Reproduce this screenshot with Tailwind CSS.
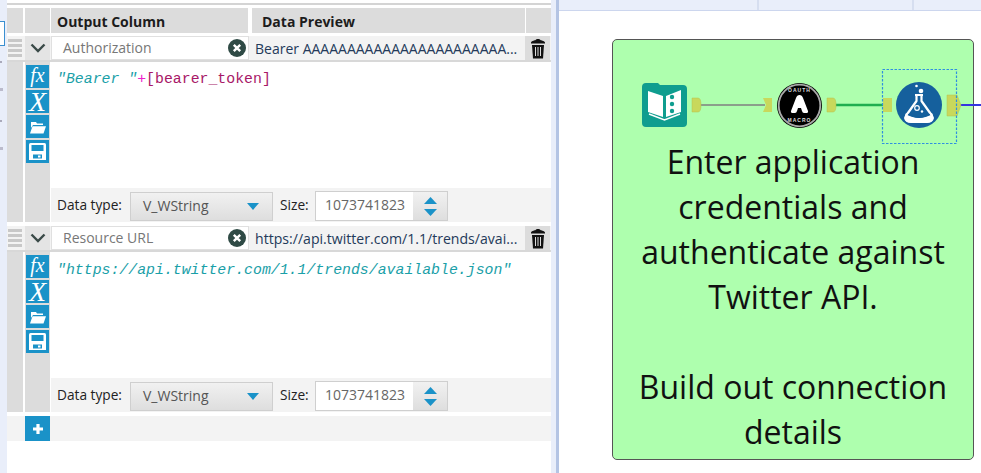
<!DOCTYPE html>
<html lang="en">
<head>
    <meta charset="UTF-8">
    <title>Download tool - Twitter API</title>
    <script src="https://cdn.jsdelivr.net/npm/@tailwindcss/browser@4"></script>
</head>
<body class="relative w-[981px] h-[473px] overflow-hidden flex bg-white font-['Open_Sans',sans-serif] text-[14px] text-[#222]">

    <!-- left strip -->
    <div class="relative w-[7px] h-full bg-[#e9eefa] shrink-0">
        <div class="absolute left-0 top-[21px] w-[5px] h-[25px] bg-white border border-l-0 border-[#3a8fd0]"></div>
        <div class="absolute left-0 top-[61px] w-[2px] h-[2px] bg-[#aab]"></div>
        <div class="absolute left-0 top-[88px] w-[3px] h-[3px] bg-[#bbc]"></div>
        <div class="absolute left-0 top-[120px] w-[2px] h-[2px] bg-[#aab]"></div>
        <div class="absolute left-0 top-[147px] w-[3px] h-[3px] bg-[#bbc]"></div>
    </div>

    <!-- configuration panel -->
    <div class="w-[544px] h-full shrink-0 flex flex-col pt-[3px]">
        <div class="h-[2px] bg-[#d4d4d4]"></div>

        <!-- header -->
        <div class="flex h-[25px] mt-[3px] font-bold text-[14px] leading-[27px] text-[#1c1c1c]">
            <div class="w-[16px] bg-[#dcdcdc]"></div>
            <div class="w-[25px] ml-[2px] bg-[#dcdcdc]"></div>
            <div class="w-[197px] ml-[1px] pl-[6px] bg-[#dcdcdc]">Output Column</div>
            <div class="w-[273px] ml-[4px] pl-[10px] bg-[#dcdcdc]">Data Preview</div>
            <div class="w-[25px] ml-[1px] bg-[#dcdcdc]"></div>
        </div>

        <!-- field 1 -->
        <div class="flex h-[26px] mt-[3px] bg-[#f3f3f3] border-b-2 border-[#d8d8d8]">
            <div class="w-[16px] flex flex-col justify-center gap-[2px] px-[1px] bg-[#f3f3f3]">
                <div class="h-[3px] bg-[#c8c8c8]"></div><div class="h-[3px] bg-[#c8c8c8]"></div><div class="h-[3px] bg-[#c8c8c8]"></div><div class="h-[3px] bg-[#c8c8c8]"></div>
            </div>
            <div class="w-[25px] ml-[2px] flex items-center justify-center bg-[#e4e4e4]">
                <svg width="16" height="10" viewBox="0 0 16 10"><path d="M1.5 1.5 8 8l6.5-6.5" fill="none" stroke="#3a4a48" stroke-width="2.4"/></svg>
            </div>
            <div class="w-[198px] ml-[1px] flex items-center justify-between pl-[11px] pr-[2px] bg-white border border-[#e0e0e0] text-[#777]">
                <span class="mb-[2px]">Authorization</span>
                <svg width="18" height="18" viewBox="0 0 18 18"><circle cx="9" cy="9" r="9" fill="#2f4a45"/><path d="M5.8 5.8l6.4 6.4M12.2 5.8l-6.4 6.4" stroke="#fff" stroke-width="2.4"/></svg>
            </div>
            <div class="w-[276px] pl-[6px] leading-[26px] whitespace-nowrap overflow-hidden text-[#243a5a]">Bearer AAAAAAAAAAAAAAAAAAAAAAA...</div>
            <div class="w-[25px] flex items-center justify-center bg-[#dcdcdc]">
                <svg width="16" height="21" viewBox="0 0 16 21"><path d="M1 4.500C2 2.500 5 2.500 5.500 2 6 .5 10 .5 10.500 2 11 2.500 14 2.500 15 4.500V5.500H1z" fill="#111"/><path d="M2 7H14L13 20.500H3z" fill="#111"/><path d="M5.500 9v9M8 9v9M10.500 9v9" stroke="#dcdcdc" stroke-width="1"/></svg>
            </div>
        </div>
        <div class="flex h-[160px]">
            <div class="w-[16px] bg-[#dcdcdc]"></div>
            <div class="w-[25px] ml-[2px] bg-[#dcdcdc] pt-[3px] pl-[1px] flex flex-col gap-[2px]">
                <div class="w-[23px] h-[23px] bg-[#1a92c8] text-white font-['Liberation_Serif',serif] italic text-[20px] leading-[21px] text-center">fx</div>
                <div class="w-[23px] h-[23px] bg-[#1a92c8] text-white font-['Liberation_Serif',serif] italic text-[28px] leading-[23px] text-center">X</div>
                <div class="w-[23px] h-[23px] bg-[#1a92c8] flex items-center justify-center">
                    <svg width="17" height="14" viewBox="0 0 17 14"><path d="M2 2h5l1 1.500h6V5H4L2 8z" fill="#fff"/><path d="M3.500 6.200H17L14.500 13.500H1z" fill="#fff"/></svg>
                </div>
                <div class="w-[23px] h-[23px] bg-[#1a92c8] flex items-center justify-center">
                    <svg width="19" height="19" viewBox="0 0 19 19"><path d="M1 2.500Q1 1 2.500 1H16.500Q18 1 18 2.500V18H1z" fill="#fff"/><rect x="3.500" y="3" width="12" height="6" fill="#1a92c8"/><rect x="5" y="12.500" width="9" height="4" fill="#1a92c8"/><rect x="10" y="13.500" width="2.500" height="2" fill="#fff"/></svg>
                </div>
            </div>
            <div class="flex-1 ml-[1px] flex flex-col">
                <div class="flex-1 bg-white pl-[6px] pt-[7px] font-['Liberation_Mono',monospace] italic text-[14.85px] leading-[20px] whitespace-pre text-[#1aa0a8]">"Bearer "<span class="not-italic text-[#ee22cc]">+</span><span class="not-italic text-[#a81868]">[bearer_token]</span></div>
                <div class="h-[34px] bg-[#f3f3f3] flex items-center pl-[6px] pt-[2px] text-[13.7px]">
                    <span class="w-[73px] mb-[2px]">Data type:</span>
                    <div class="w-[143px] h-[29px] flex items-center justify-between pl-[12px] pr-[13px] border border-[#cfcfcf] bg-linear-to-b from-[#f1f1f1] to-[#dedede] text-[#555] text-[14px]">
                        <span class="mb-[2px]">V_WString</span>
                        <svg width="12" height="7" viewBox="0 0 12 7"><path d="M0 0H12L6 7z" fill="#1a92c8"/></svg>
                    </div>
                    <span class="ml-[7px] w-[35px] mb-[2px]">Size:</span>
                    <div class="w-[133px] h-[30px] flex border border-[#cfcfcf] bg-white text-[#666] text-[14px]">
                        <span class="w-[97px] pl-[9px] leading-[26px]">1073741823</span>
                        <div class="flex-1 flex flex-col items-center justify-center gap-[5px] bg-linear-to-b from-[#f1f1f1] to-[#dedede]">
                            <svg width="13" height="7" viewBox="0 0 13 7"><path d="M0 7H13L6.500 0z" fill="#1a92c8"/></svg>
                            <svg width="13" height="7" viewBox="0 0 13 7"><path d="M0 0H13L6.500 7z" fill="#1a92c8"/></svg>
                        </div>
                    </div>
                </div>
            </div>
        </div>

        <!-- field 2 -->
        <div class="flex h-[26px] mt-[4px] bg-[#f3f3f3] border-b-2 border-[#d8d8d8]">
            <div class="w-[16px] flex flex-col justify-center gap-[2px] px-[1px] bg-[#f3f3f3]">
                <div class="h-[3px] bg-[#c8c8c8]"></div><div class="h-[3px] bg-[#c8c8c8]"></div><div class="h-[3px] bg-[#c8c8c8]"></div><div class="h-[3px] bg-[#c8c8c8]"></div>
            </div>
            <div class="w-[25px] ml-[2px] flex items-center justify-center bg-[#e4e4e4]">
                <svg width="16" height="10" viewBox="0 0 16 10"><path d="M1.5 1.5 8 8l6.5-6.5" fill="none" stroke="#3a4a48" stroke-width="2.4"/></svg>
            </div>
            <div class="w-[198px] ml-[1px] flex items-center justify-between pl-[11px] pr-[2px] bg-white border border-[#e0e0e0] text-[#777]">
                <span class="mb-[2px]">Resource URL</span>
                <svg width="18" height="18" viewBox="0 0 18 18"><circle cx="9" cy="9" r="9" fill="#2f4a45"/><path d="M5.8 5.8l6.4 6.4M12.2 5.8l-6.4 6.4" stroke="#fff" stroke-width="2.4"/></svg>
            </div>
            <div class="w-[276px] pl-[6px] leading-[26px] whitespace-nowrap overflow-hidden text-[#243a5a] text-[14.1px]">https://api.twitter.com/1.1/trends/avai...</div>
            <div class="w-[25px] flex items-center justify-center bg-[#dcdcdc]">
                <svg width="16" height="21" viewBox="0 0 16 21"><path d="M1 4.500C2 2.500 5 2.500 5.500 2 6 .5 10 .5 10.500 2 11 2.500 14 2.500 15 4.500V5.500H1z" fill="#111"/><path d="M2 7H14L13 20.500H3z" fill="#111"/><path d="M5.500 9v9M8 9v9M10.500 9v9" stroke="#dcdcdc" stroke-width="1"/></svg>
            </div>
        </div>
        <div class="flex h-[160px]">
            <div class="w-[16px] bg-[#dcdcdc]"></div>
            <div class="w-[25px] ml-[2px] bg-[#dcdcdc] pt-[3px] pl-[1px] flex flex-col gap-[2px]">
                <div class="w-[23px] h-[23px] bg-[#1a92c8] text-white font-['Liberation_Serif',serif] italic text-[20px] leading-[21px] text-center">fx</div>
                <div class="w-[23px] h-[23px] bg-[#1a92c8] text-white font-['Liberation_Serif',serif] italic text-[28px] leading-[23px] text-center">X</div>
                <div class="w-[23px] h-[23px] bg-[#1a92c8] flex items-center justify-center">
                    <svg width="17" height="14" viewBox="0 0 17 14"><path d="M2 2h5l1 1.500h6V5H4L2 8z" fill="#fff"/><path d="M3.500 6.200H17L14.500 13.500H1z" fill="#fff"/></svg>
                </div>
                <div class="w-[23px] h-[23px] bg-[#1a92c8] flex items-center justify-center">
                    <svg width="19" height="19" viewBox="0 0 19 19"><path d="M1 2.500Q1 1 2.500 1H16.500Q18 1 18 2.500V18H1z" fill="#fff"/><rect x="3.500" y="3" width="12" height="6" fill="#1a92c8"/><rect x="5" y="12.500" width="9" height="4" fill="#1a92c8"/><rect x="10" y="13.500" width="2.500" height="2" fill="#fff"/></svg>
                </div>
            </div>
            <div class="flex-1 ml-[1px] flex flex-col">
                <div class="flex-1 bg-white pl-[6px] pt-[8px] font-['Liberation_Mono',monospace] italic text-[14.85px] leading-[20px] whitespace-pre text-[#1aa0a8]">"https://api.twitter.com/1.1/trends/available.json"</div>
                <div class="h-[34px] bg-[#f3f3f3] flex items-center pl-[6px] pt-[2px] text-[13.7px]">
                    <span class="w-[73px] mb-[2px]">Data type:</span>
                    <div class="w-[143px] h-[29px] flex items-center justify-between pl-[12px] pr-[13px] border border-[#cfcfcf] bg-linear-to-b from-[#f1f1f1] to-[#dedede] text-[#555] text-[14px]">
                        <span class="mb-[2px]">V_WString</span>
                        <svg width="12" height="7" viewBox="0 0 12 7"><path d="M0 0H12L6 7z" fill="#1a92c8"/></svg>
                    </div>
                    <span class="ml-[7px] w-[35px] mb-[2px]">Size:</span>
                    <div class="w-[133px] h-[30px] flex border border-[#cfcfcf] bg-white text-[#666] text-[14px]">
                        <span class="w-[97px] pl-[9px] leading-[26px]">1073741823</span>
                        <div class="flex-1 flex flex-col items-center justify-center gap-[5px] bg-linear-to-b from-[#f1f1f1] to-[#dedede]">
                            <svg width="13" height="7" viewBox="0 0 13 7"><path d="M0 7H13L6.500 0z" fill="#1a92c8"/></svg>
                            <svg width="13" height="7" viewBox="0 0 13 7"><path d="M0 0H13L6.500 7z" fill="#1a92c8"/></svg>
                        </div>
                    </div>
                </div>
            </div>
        </div>

        <!-- add row -->
        <div class="flex h-[25px] mt-[4px] bg-[#f3f3f3]">
            <div class="w-[25px] ml-[18px] bg-[#1a92c8] flex items-center justify-center">
                <svg width="12" height="12" viewBox="0 0 12 12"><path d="M6 1v10M1 6h10" stroke="#fff" stroke-width="3.200"/></svg>
            </div>
        </div>
    </div>

    <!-- splitter -->
    <div class="w-[5px] h-full bg-[#e9eefa] shrink-0"></div>
    <div class="w-[3px] h-full bg-[#b4c4e4] shrink-0"></div>

    <!-- canvas -->
    <div class="flex-1 h-full flex flex-col min-w-0">
        <div class="h-[11px] shrink-0 flex bg-[#e9eefa] border-b border-[#ccd6ee]">
            <div class="w-[200px] border-r-2 border-[#d6def0]"></div>
            <div class="w-[155px] border-r-2 border-[#d6def0]"></div>
        </div>
        <div class="flex-1 pt-[28px] pl-[53px]">
            <div class="w-[362px] h-[421px] bg-[#aeffae] border-[1.5px] border-[#555] rounded-[5px] pt-[99px] text-center text-[#111] text-[32px] leading-[45px]">
                Enter application<br>credentials and<br>authenticate against<br>Twitter API.<br><br>Build out connection<br>details
            </div>
        </div>
    </div>

    <!-- workflow nodes, drawn in page coordinates -->
    <svg class="absolute left-0 top-0" width="981" height="473" viewBox="0 0 981 473">
        <!-- connections -->
        <path d="M700 105H765" stroke="#8b9f8b" stroke-width="2"/>
        <path d="M835 105H885" stroke="#1fae4f" stroke-width="2.500"/>
        <path d="M960 105H981" stroke="#3535e0" stroke-width="2"/>

        <!-- text input tool -->
        <path d="M642 87Q642 83 646 83H658L660 85H683Q687 85 687 89V123Q687 127 683 127H646Q642 127 642 123z" fill="#0f9d8f"/>
        <path d="M648 91 663 96V117L648 112z" fill="#fff"/>
        <path d="M666 96 681 90V112L666 117z" fill="#fff"/>
        <circle cx="672" cy="97" r="2.200" fill="#0f9d8f"/><circle cx="672" cy="104" r="2.200" fill="#0f9d8f"/><circle cx="672" cy="111" r="2.200" fill="#0f9d8f"/>
        <path d="M649 114 664.500 120 680 114" fill="none" stroke="#fff" stroke-width="1.500"/>

        <!-- anchors -->
        <path d="M692 98H698Q701 98 701 105Q701 112 698 112H692z" fill="#c8d85c" stroke="#b4c04c" stroke-width=".5"/>
        <path d="M763 98H772V112H763L766 105z" fill="#c8d85c"/>
        <path d="M827 98H833Q836 98 836 105Q836 112 833 112H827z" fill="#c8d85c" stroke="#b4c04c" stroke-width=".5"/>
        <path d="M883 98H892V112H883z" fill="#c8d85c"/>
        <path d="M947 95H957L961 105 957 116H947z" fill="#c8d85c" stroke="#b4c04c" stroke-width=".5"/>

        <!-- oauth macro -->
        <circle cx="799.500" cy="105.500" r="22.500" fill="#000"/>
        <circle cx="799.500" cy="105.500" r="20.800" fill="none" stroke="#aaa" stroke-width="1.800"/>
        <path d="M799.500 95Q802 95 803 98L808 111Q808.500 113 806 113H804Q802.500 113 802 111L801 108H798L797 111Q796.500 113 795 113H793Q790.500 113 791 111L796 98Q797 95 799.500 95z" fill="#fff"/>
        <text x="799.500" y="92" text-anchor="middle" font-family="Liberation Sans" font-weight="700" font-size="5" letter-spacing="1" fill="#ddd">OAUTH</text>
        <text x="799.500" y="122" text-anchor="middle" font-family="Liberation Sans" font-weight="700" font-size="5" letter-spacing="1" fill="#ddd">MACRO</text>

        <!-- download tool, selected -->
        <rect x="882.500" y="69.500" width="74" height="74" fill="none" stroke="#2f8fe0" stroke-width="1.200" stroke-dasharray="2.500 1.500"/>
        <circle cx="919" cy="105" r="23" fill="#15609d"/>
        <path d="M915 95H923M916.500 95V101L906.500 115Q904 121.500 911 121.500H927Q934 121.500 931.500 115L921.500 101V95" fill="none" stroke="#fff" stroke-width="2.200" stroke-linejoin="round"/>
        <path d="M906 113Q919 123 932 113L934 118Q933 123 927 123H911Q905 123 904 118z" fill="#fff"/>
        <path d="M908 114.500Q919 120 930 114.500" fill="none" stroke="#15609d" stroke-width="1.400"/>
        <circle cx="917" cy="108" r="2.300" fill="none" stroke="#fff" stroke-width="1.200"/>
        <circle cx="922" cy="111.500" r="1.200" fill="#fff"/>
        <circle cx="921" cy="91" r="2.300" fill="#fff"/><circle cx="916.500" cy="86" r="1.300" fill="#fff"/>
    </svg>
</body>
</html>
